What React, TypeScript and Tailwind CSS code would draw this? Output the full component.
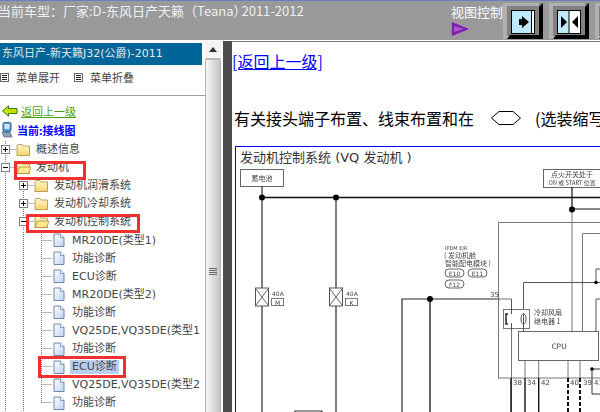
const cjk = '"Noto Sans CJK SC", "Liberation Sans", sans-serif';
const latin = '"DejaVu Sans", "Noto Sans CJK SC", sans-serif';

type TreeItem = {
  label: string;
  level: number;
  kind: 'closed' | 'open' | 'doc';
  expander?: '+' | '-';
  selected?: boolean;
};

const items: TreeItem[] = [
  { label: '概述信息', level: 0, kind: 'closed', expander: '+' },
  { label: '发动机', level: 0, kind: 'open', expander: '-' },
  { label: '发动机润滑系统', level: 1, kind: 'closed', expander: '+' },
  { label: '发动机冷却系统', level: 1, kind: 'closed', expander: '+' },
  { label: '发动机控制系统', level: 1, kind: 'open', expander: '-' },
  { label: 'MR20DE(类型1)', level: 2, kind: 'doc' },
  { label: '功能诊断', level: 2, kind: 'doc' },
  { label: 'ECU诊断', level: 2, kind: 'doc' },
  { label: 'MR20DE(类型2)', level: 2, kind: 'doc' },
  { label: '功能诊断', level: 2, kind: 'doc' },
  { label: 'VQ25DE,VQ35DE(类型1', level: 2, kind: 'doc' },
  { label: '功能诊断', level: 2, kind: 'doc' },
  { label: 'ECU诊断', level: 2, kind: 'doc', selected: true },
  { label: 'VQ25DE,VQ35DE(类型2', level: 2, kind: 'doc' },
  { label: '功能诊断', level: 2, kind: 'doc' },
];

function Guide() {
  return (
    <svg width="18" height="18" className="shrink-0">
      <line x1="5.5" y1="0" x2="5.5" y2="18" stroke="#777" strokeDasharray="1 1" />
    </svg>
  );
}

function Connector({ expander, last }: { expander?: '+' | '-'; last?: boolean }) {
  return (
    <svg width="16" height="18" className="shrink-0">
      <line x1="5.5" y1="0" x2="5.5" y2={last ? 9 : 18} stroke="#777" strokeDasharray="1 1" />
      <line x1="5.5" y1="8.5" x2="16" y2="8.5" stroke="#777" strokeDasharray="1 1" />
      {expander && (
        <>
          <rect x="1.5" y="4.5" width="8" height="8" fill="#fff" stroke="#808080" />
          <line x1="3" y1="8.5" x2="8" y2="8.5" stroke="#000" />
          {expander === '+' && <line x1="5.5" y1="6" x2="5.5" y2="11" stroke="#000" />}
        </>
      )}
    </svg>
  );
}

function Folder({ open }: { open: boolean }) {
  return (
    <svg width="15" height="14" viewBox="0 0 15 14" className="shrink-0">
      <defs>
        <linearGradient id="fold" x1="0" y1="0" x2="0" y2="1">
          <stop offset="0" stopColor="#fff8d4" />
          <stop offset="1" stopColor="#f8d467" />
        </linearGradient>
      </defs>
      <path d="M1 3 L2 1.5 H6 L7 3 H13.5 V12.5 H1 Z" fill="url(#fold)" stroke="#a98d3d" strokeWidth="0.8" />
      {open && <path d="M1 12.5 L3.5 6 H14.8 L13 12.5 Z" fill="#ffe88e" stroke="#a98d3d" strokeWidth="0.8" />}
    </svg>
  );
}

function Doc() {
  return (
    <svg width="14" height="15" viewBox="0 0 14 15" className="shrink-0">
      <defs>
        <linearGradient id="doc" x1="0" y1="0" x2="1" y2="1">
          <stop offset="0" stopColor="#ffffff" />
          <stop offset="1" stopColor="#bcd2f0" />
        </linearGradient>
      </defs>
      <path d="M2 1 H8.5 L12 4.5 V13.5 H2 Z" fill="url(#doc)" stroke="#6f86ad" />
      <path d="M8.5 1 V4.5 H12" fill="#fff" stroke="#6f86ad" strokeWidth="0.8" />
    </svg>
  );
}

function TreeRow({ item, last }: { item: TreeItem; last: boolean }) {
  const guides = item.kind === 'doc' ? 2 : item.level;
  return (
    <div
      className="flex h-[18.1px] items-center whitespace-nowrap text-[11px] leading-[14px] text-[#444]"
      style={{ fontFamily: latin }}
    >
      {Array.from({ length: guides }).map((_, i) => (
        <Guide key={i} />
      ))}
      <Connector expander={item.expander} last={last} />
      {item.kind === 'doc' ? <Doc /> : <Folder open={item.kind === 'open'} />}
      <span
        className={item.kind === 'doc' ? 'ml-[4px] px-[2px]' : 'ml-[5px]'}
        style={{ backgroundColor: item.selected ? '#b9cfee' : undefined }}
      >
        {item.label}
      </span>
    </div>
  );
}

function MenuIcon() {
  return (
    <svg width="9" height="9" className="shrink-0">
      <rect x="0.5" y="0.5" width="8" height="8" fill="#fff" stroke="#666" />
      <path d="M2 2.5 H7 M2 4.5 H7 M2 6.5 H7" stroke="#222" />
    </svg>
  );
}

function ViewButton({ mode }: { mode: 'left' | 'both' | 'right' }) {
  return (
    <svg width="40" height="36" viewBox="0 0 40 36" className="shrink-0">
      <rect width="40" height="36" fill="#808080" />
      <path d="M0 0 H36 V3 H4 V33 H36 V36 H0 Z" fill="#b0b0b0" />
      <path d="M36 4 L40 0 V36 H4 L7 32 H36 Z" fill="#000" />
      <rect x="8.5" y="7.5" width="23" height="23" fill="#fff" stroke="#000" />
      {mode === 'left' && (
        <>
          <rect x="9" y="8" width="20" height="22" fill="#bfe9ff" />
          <line x1="28.5" y1="8" x2="28.5" y2="30" stroke="#000" />
          <path d="M19 13 L26 19 L19 25 Z M16 16 H20 V22 H16 Z" fill="#000" />
        </>
      )}
      {mode === 'both' && (
        <>
          <rect x="9" y="8" width="11" height="22" fill="#bfe9ff" />
          <line x1="20" y1="8" x2="20" y2="30" stroke="#000" />
          <path d="M12 13 L18 19 L12 25 Z M29 13 L23 19 L29 25 Z" fill="#000" />
        </>
      )}
      {mode === 'right' && <rect x="9" y="8" width="21" height="22" fill="#bfe9ff" />}
    </svg>
  );
}

function Diagram() {
  const dark = '#2b2b2b';
  const mid = '#777';
  const small = { fontFamily: cjk, fontSize: 7, fill: '#444' };
  return (
    <svg width="364" height="245" viewBox="236 167 364 245" className="block blur-[0.3px]">
      <rect x="240.5" y="168.5" width="43" height="17" fill="#fff" stroke="#666" />
      <text x="262" y="180" textAnchor="middle" {...small}>蓄电池</text>
      <rect x="543.5" y="168.5" width="60" height="18" fill="#fff" stroke="#666" />
      <text x="572" y="175.5" textAnchor="middle" {...small}>点火开关处于</text>
      <text x="572" y="184" textAnchor="middle" {...small} fontSize="5.8">ON 或 START 位置</text>

      <path d="M262 196.5 H600" stroke="#111" strokeWidth="1.3" />
      <path d="M262 185 V412 M336 196 V412" stroke={dark} strokeWidth="1.2" fill="none" />
      <circle cx="262" cy="196.5" r="3" fill="#000" />
      <circle cx="336" cy="196.5" r="3" fill="#000" />

      {[256, 330].map((x, i) => (
        <g key={x}>
          <rect x={x - 0.5} y="287" width="13" height="18" fill="#fff" stroke="#555" />
          <path d={`M${x} 288 L${x + 12} 304 M${x + 12} 288 L${x} 304`} stroke="#666" fill="none" />
          <text x={x + 16} y="295" {...small} fontFamily={latin} fontSize="6">40A</text>
          <rect x={x + 15.5} y="297.5" width="12" height="7" fill="#fff" stroke="#777" />
          <text x={x + 21.5} y="303.5" textAnchor="middle" {...small} fontFamily={latin} fontSize="6">{i === 0 ? 'M' : 'K'}</text>
        </g>
      ))}

      <path d="M402 412 V298 H500" stroke={dark} strokeWidth="1.2" fill="none" />
      <path d="M295 412 V410 H322 V412" stroke={dark} strokeWidth="1.2" fill="none" />
      <circle cx="430" cy="298" r="3" fill="#000" />
      <path d="M430 298 V412" stroke="#111" strokeWidth="1.3" />

      <text x="445" y="248.5" {...small} fontFamily={latin} fontSize="5">IPDM E/R</text>
      <text x="444" y="256.5" {...small}>( 发动机舱</text>
      <text x="445" y="264.5" {...small}>智能配电模块 )</text>
      {[
        [445, 272, 'E10'],
        [468, 272, 'E11'],
        [445, 283, 'F12'],
      ].map(([x, y, t]) => (
        <g key={t as string}>
          <rect x={x as number} y={(y as number) - 4} width="19" height="8" rx="4" fill="#fff" stroke="#666" />
          <text x={(x as number) + 9.5} y={(y as number) + 2.5} textAnchor="middle" {...small} fontFamily={latin} fontSize="6">{t}</text>
        </g>
      ))}

      <rect x="498.5" y="221.5" width="120" height="155.5" fill="none" stroke={mid} />
      <path d="M582.5 330 V232.5 H600" stroke={mid} fill="none" />
      <path d="M572 186 V208 H600" stroke="#111" strokeWidth="1.2" fill="none" />
      <path d="M572 208 V330" stroke={mid} fill="none" />
      <circle cx="572" cy="208.5" r="3" fill="#000" />
      <path d="M523.5 310 V281.5 H600 M596 281 V268 H600 M596 330 V298 H600" stroke="#555" fill="none" />
      <circle cx="596" cy="281.5" r="1.8" fill="#000" />

      <path d="M500 298 H511.5 V412" stroke={mid} fill="none" />
      <text x="490" y="296" {...small} fontFamily={latin}>35</text>

      <rect x="503.5" y="308.5" width="26" height="19" fill="#fff" stroke="#777" />
      <path d="M511.5 298 V313 M511.5 322 V330 M523.5 312 V327 M523.5 327 V330" stroke="#555" fill="none" />
      <path d="M508 313 H506 V323 H508" stroke="#222" strokeWidth="1.5" fill="none" />
      <ellipse cx="523.5" cy="318" rx="2.5" ry="5" fill="none" stroke="#555" />
      <text x="534" y="314" {...small}>冷却风扇</text>
      <text x="534" y="323" {...small}>继电器 1</text>

      <rect x="518.5" y="330.5" width="80" height="29" fill="#fff" stroke="#666" />
      <text x="559" y="347.5" textAnchor="middle" {...small} fontSize="7.5" fontFamily={latin}>CPU</text>

      <path d="M525 360 V377 M538.7 360 V377 M568 360 V377 M580 360 V377" stroke={mid} fill="none" />
      <path d="M511 377 V412 M525 377 V412 M538.7 377 V412" stroke="#111" strokeWidth="1.4" fill="none" />
      <path d="M568 377 V412 M580 377 V412" stroke="#111" strokeWidth="2" strokeDasharray="4 2" fill="none" />
      <path d="M592 368 V393 H600 M592 368 H600" stroke="#333" fill="none" />
      <circle cx="592" cy="368" r="1.8" fill="#000" />
      {[
        [513, '38'],
        [527, '34'],
        [541, '42'],
        [570, '40'],
        [583, '39'],
        [594, '41'],
      ].map(([x, t]) => (
        <text key={t as string} x={x as number} y="384" {...small} fontFamily={latin}>{t}</text>
      ))}
    </svg>
  );
}

export default function App() {
  return (
    <div className="relative flex h-[412px] w-[600px] flex-col overflow-hidden bg-white" style={{ fontFamily: cjk }}>
      {/* barre du haut */}
      <div className="flex h-[41px] shrink-0 justify-between border-t border-[#6b7fc0] border-b border-b-white bg-[#999999]">
        <div className="ml-[-2px] mt-[1px] whitespace-nowrap text-[13px] leading-[18px] text-[#f0f0f0]">
          当前车型：厂家:D-东风日产天籁（Teana）<span className="ml-[-5px]">2011-2012</span>
        </div>
        <div className="flex w-[149px] shrink-0 overflow-hidden">
          <div className="mt-[2px] flex w-[52px] shrink-0 flex-col">
            <span className="whitespace-nowrap text-[13px] leading-[18px] text-white">视图控制</span>
            <svg width="20" height="16" viewBox="0 0 20 16">
              <path d="M0.5 0.5 L19 8 L0.5 15.5 Z" fill="#7a1fb0" stroke="#d9c7e6" strokeWidth="0.7" strokeDasharray="1 1" />
              <path d="M3 5 L13 8 L3 11 Z" fill="#a855c8" />
            </svg>
          </div>
          <div className="mt-[2px] flex gap-[6px]">
            <ViewButton mode="left" />
            <ViewButton mode="both" />
            <ViewButton mode="right" />
          </div>
        </div>
      </div>

      <div className="flex min-h-0 flex-1">
        {/* arbre */}
        <div className="w-[205px] shrink-0 overflow-hidden pt-[2px]">
          <div
            className="flex h-[22px] w-[202px] items-center whitespace-nowrap bg-[#006699] pl-[2px] text-[11px] text-[#e8e8e8]"
            style={{ fontFamily: latin }}
          >
            东风日产-新天籁J32(公爵)-2011
          </div>
          <div className="flex h-[31px] items-center border-b border-[#a0a0a0] pb-[6px] text-[11px] text-[#444]">
            <MenuIcon />
            <span className="ml-[7px] mr-[14px]">菜单展开</span>
            <MenuIcon />
            <span className="ml-[7px]">菜单折叠</span>
          </div>
          <div className="mt-[5px] flex h-[19px] items-center pl-[2px]">
            <svg width="16" height="12" viewBox="0 0 16 12">
              <path d="M0.5 6 L6.5 0.8 V3.5 H15 V8.5 H6.5 V11.2 Z" fill="#c8e000" stroke="#2e7d10" />
            </svg>
            <span className="ml-[3px] text-[11px] leading-[14px] text-[#4c9e14] underline">返回上一级</span>
          </div>
          <div className="flex h-[20px] items-center pl-[1px]">
            <svg width="12" height="16" viewBox="0 0 12 16">
              <rect x="2" y="0.5" width="8" height="9" rx="1.5" fill="#5b9bd8" stroke="#2a5f9e" />
              <rect x="3.5" y="2" width="5" height="5" fill="#cfe6fa" />
              <path d="M1 10 H9 L11 15 H3 Z" fill="#8aa0b8" stroke="#50647c" strokeWidth="0.7" />
            </svg>
            <span className="ml-[4px] text-[11px] font-bold leading-[14px] text-[#0000ff]">当前:接线图</span>
          </div>
          <div className="mt-[1px]">
            {items.map((item, i) => (
              <TreeRow key={i} item={item} last={i === items.length - 1} />
            ))}
          </div>
        </div>

        {/* ascenseur */}
        <div className="flex w-[18px] shrink-0 flex-col overflow-hidden border-r-2 border-white bg-[#f2f2f2]">
          <div className="flex h-[18px] shrink-0 items-center justify-center border-b border-[#bbb] bg-[#f4f4f4]">
            <svg width="8" height="5">
              <path d="M4 0 L8 5 H0 Z" fill="#333" />
            </svg>
          </div>
          <div className="flex h-[426px] shrink-0 items-center justify-center rounded-[2px] border border-[#b5b5b5] bg-gradient-to-r from-[#f6f6f6] to-[#c4c4c4]">
            <svg width="8" height="8">
              <path d="M0 0.5 H8 M0 2.5 H8 M0 4.5 H8 M0 6.5 H8" stroke="#666" />
            </svg>
          </div>
        </div>

        {/* separateur */}
        <div className="w-[9px] shrink-0 bg-[#4d4d4d]" />

        {/* contenu */}
        <div className="min-w-0 flex-1 overflow-hidden border-t border-[#777]">
          <a className="mt-[9px] block whitespace-nowrap text-[16px] leading-[20px] text-[#0000ff] underline">[返回上一级]</a>
          <div className="mt-[37px] flex h-[20px] items-center whitespace-nowrap text-[16px] leading-[20px] text-black">
            <span className="ml-[2px]">有关接头端子布置、线束布置和在</span>
            <svg width="30" height="14" viewBox="0 0 30 14" className="ml-[17px] shrink-0">
              <path d="M0.5 7 L8 0.5 H22 L29.5 7 L22 13.5 H8 Z" fill="#fff" stroke="#000" />
            </svg>
            <span className="ml-[14px]">(选装缩写</span>
          </div>
          <div className="ml-[3px] mt-[18px] h-[300px] w-[400px] border border-[#0000ff]">
            <div
              className="h-[21px] whitespace-nowrap pl-[4px] text-[13px] leading-[22px] text-[#333]"
              style={{ fontFamily: latin }}
            >
              发动机控制系统 (VQ 发动机 )
            </div>
            <Diagram />
          </div>
        </div>
      </div>

      {/* reperes rouges */}
      <div className="absolute left-[14px] top-[161px] h-[19px] w-[72px] border-[3px] border-[#f03030]" />
      <div className="absolute left-[26px] top-[214px] h-[19px] w-[114px] border-[3px] border-[#f03030]" />
      <div className="absolute left-[38px] top-[356px] h-[22px] w-[88px] border-[3px] border-[#f03030]" />
    </div>
  );
}
